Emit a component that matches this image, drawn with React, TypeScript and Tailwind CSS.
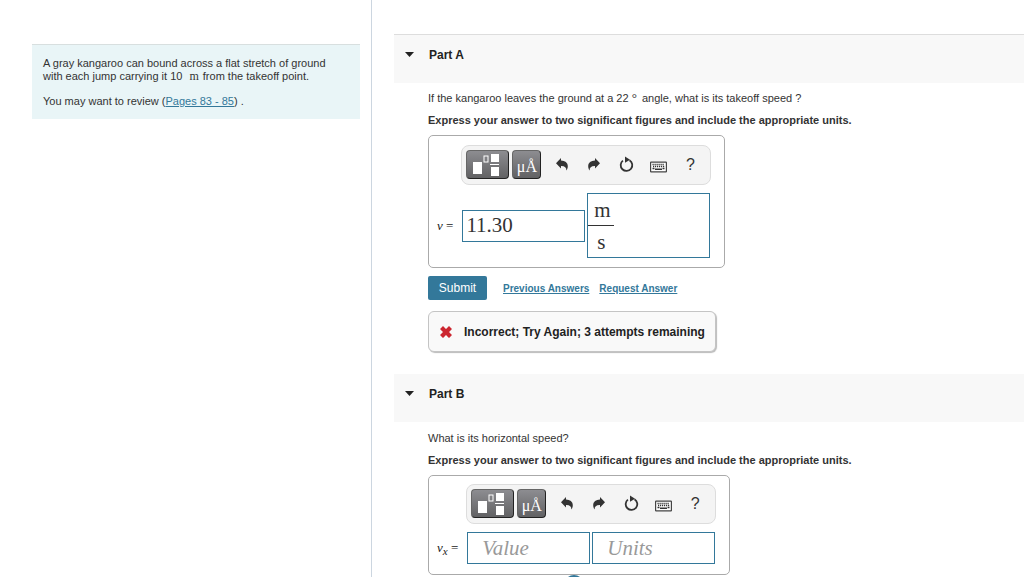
import type { ReactNode } from "react";

const sans = "font-['Liberation_Sans',Arial,sans-serif]";
const serif = "font-['Liberation_Serif','Times_New_Roman',serif]";

interface PartHeaderProps {
  title: string;
  first?: boolean;
}

function PartHeader({ title, first = false }: PartHeaderProps) {
  return (
    <button
      type="button"
      aria-expanded="true"
      className={`flex w-full items-start bg-[#f8f8f8] pt-3 pl-[11px] text-left ${first ? "h-[49px] border-t border-[#dddddd]" : "h-12"}`}
    >
      <svg viewBox="0 0 9 5" className="mt-[5px] h-[5px] w-[9px] fill-[#222222]" aria-hidden="true">
        <path d="M0 0h9L4.5 5z" />
      </svg>
      <span className="ml-[15px] text-xs leading-4 font-bold text-[#222222]">{title}</span>
    </button>
  );
}

function TemplatesIcon() {
  return (
    <svg viewBox="0 0 32 22" className="h-[22px] w-8" aria-hidden="true">
      <rect x="1" y="8" width="9" height="12" fill="#fff" />
      <rect x="12" y="2" width="4" height="6" fill="none" stroke="#fff" />
      <rect x="19" y="0" width="8" height="8" fill="#fff" />
      <rect x="18" y="10" width="9" height="1" fill="#fff" />
      <rect x="19" y="13" width="8" height="9" fill="#fff" />
    </svg>
  );
}

function UndoIcon({ flipped = false }: { flipped?: boolean }) {
  return (
    <svg viewBox="0 0 12 13" className="h-[13px] w-3 fill-[#333333]" aria-hidden="true">
      <path
        d="M5 0v2.6C9 2.8 11.8 4.8 11.8 8.2c0 1.7-.6 3.2-1.4 4.3.1-3-1.6-4.6-5.4-4.5V10.500L0 5.200z"
        transform={flipped ? "translate(12 0) scale(-1 1)" : undefined}
      />
    </svg>
  );
}

function ResetIcon() {
  return (
    <svg viewBox="0 0 15 17" className="h-[17px] w-[15px]" aria-hidden="true">
      <path d="M10.5 4.200A5.800 5.800 0 1 1 3.900 4.600" fill="none" stroke="#333333" strokeWidth="1.8" />
      <path d="M6 .5l5 3.300L6 6.800z" fill="#333333" />
    </svg>
  );
}

function KeyboardIcon() {
  return (
    <svg viewBox="0 0 17 12" className="h-3 w-[17px]" aria-hidden="true">
      <rect x="0.6" y="1.1" width="15.8" height="9.8" rx="0.5" fill="#fff" stroke="#444444" strokeWidth="1.2" />
      <path d="M2.5 3.5h12M3 5.5h11.5" stroke="#333333" strokeWidth="1.3" strokeDasharray="1.2 .8" />
      <path d="M2.5 7.5h2M12.5 7.5h2M5 8.3h7" stroke="#333333" strokeWidth="1.4" />
    </svg>
  );
}

const darkButton =
  "flex h-[29px] items-center justify-center rounded border border-[#666666] border-r-[#222222] border-b-[#222222] bg-linear-to-b from-[#8d8d91] to-[#626264] text-white";

function Toolbar() {
  return (
    <div className="flex h-10 w-[250px] items-center rounded-lg border border-[#dddddd] bg-[#f4f4f4] pb-px pl-1">
      <button type="button" aria-label="Templates" className={`${darkButton} w-[43px]`}>
        <TemplatesIcon />
      </button>
      <button type="button" aria-label="Symbols" className={`${darkButton} ml-[3px] w-[29px] pt-1 ${serif} text-base`}>
        μÅ
      </button>
      <div className="ml-[5px] flex flex-1 items-center">
        <button type="button" aria-label="Undo" className="flex w-8 justify-center">
          <UndoIcon />
        </button>
        <button type="button" aria-label="Redo" className="flex w-8 justify-center">
          <UndoIcon flipped />
        </button>
        <button type="button" aria-label="Reset" className="flex w-8 justify-center">
          <ResetIcon />
        </button>
        <button type="button" aria-label="Keyboard shortcuts" className="flex w-8 justify-center pt-1">
          <KeyboardIcon />
        </button>
        <button type="button" aria-label="Help" className="w-8 text-center text-base leading-5 text-[#333333]">
          ?
        </button>
      </div>
    </div>
  );
}

interface AnswerBoxProps {
  id: string;
  label: ReactNode;
  value?: string;
  units: ReactNode;
  className: string;
}

function AnswerBox({ id, label, value, units, className }: AnswerBoxProps) {
  return (
    <div className={`mt-2 w-fit rounded-[5px] border border-[#aaaaaa] bg-white pr-[13px] pl-2 ${className}`}>
      <div className="grid grid-cols-[auto_auto] items-center gap-y-2">
        <div className="col-start-2">
          <Toolbar />
        </div>
        <label htmlFor={id} className={`${serif} pr-2 text-[13px] leading-4 text-[#222222]`}>
          {label}
        </label>
        <div className="flex items-center gap-0.5 pl-px">
          <input
            id={id}
            defaultValue={value}
            placeholder="Value"
            className={`${serif} h-8 w-[123px] border border-[#33789a] bg-white text-[21px] text-[#333333] placeholder:text-[#999999] placeholder:italic ${value ? "px-[3px]" : "px-[14px]"}`}
          />
          {units}
        </div>
      </div>
    </div>
  );
}

function Instructions() {
  return (
    <p className="mt-2 text-[11px] leading-[14px] font-bold text-[#333333]">
      Express your answer to two significant figures and include the appropriate units.
    </p>
  );
}

export default function App() {
  return (
    <div className={`flex h-screen overflow-hidden bg-white ${sans} text-[11px] text-[#333333]`}>
      <aside className="w-[372px] shrink-0 border-r border-[#ccd6e0] pt-11 pr-[11px] pl-8">
        <div className="border-t border-[#d8dfdf] bg-[#e9f5f7] pt-3 pr-5 pb-[11px] pl-[11px] leading-[13px]">
          <p>
            A gray kangaroo can bound across a flat stretch of ground with each jump carrying it 10{" "}
            <span className={`${serif} px-1 text-xs leading-3`}>m</span>from the takeoff point.
          </p>
          <p className="mt-3">
            You may want to review (
            <a href="#pages" className="text-[#33789a] underline">
              Pages 83 - 85
            </a>
            ) .
          </p>
        </div>
      </aside>

      <main className="min-w-0 flex-1 pt-[34px] pl-[22px]">
        <section>
          <PartHeader title="Part A" first />
          <div className="pt-2 pl-[34px]">
            <p className="leading-[14px]">
              If the kangaroo leaves the ground at a 22 <span className={`${serif} pr-0.5 text-[13px] leading-3`}>°</span>{" "}
              angle, what is its takeoff speed ?
            </p>
            <Instructions />
            <AnswerBox
              id="takeoff-speed"
              label={
                <>
                  <i>v</i> =
                </>
              }
              value="11.30"
              className="pt-[9px] pb-[9px]"
              units={
                <div
                  role="textbox"
                  aria-label="Units"
                  tabIndex={0}
                  className={`${serif} h-[65px] w-[123px] border border-[#33789a] text-[21px] leading-8`}
                >
                  <div className="flex w-[26px] flex-col text-center">
                    <span className="h-8 border-b border-[#333333] pl-0.5">m</span>
                    <span className="h-8">s</span>
                  </div>
                </div>
              }
            />
            <div className="mt-2 flex items-center">
              <button type="button" className="h-6 w-[59px] rounded-xs bg-[#33789a] text-xs text-white">
                Submit
              </button>
              <a href="#previous" className="ml-4 text-[10px] font-bold text-[#33789a] underline">
                Previous Answers
              </a>
              <a href="#request" className="ml-[10px] text-[10px] font-bold text-[#33789a] underline">
                Request Answer
              </a>
            </div>
            <div className="mt-[11px] flex h-[41px] w-fit items-center rounded-md border border-[#c4c4c4] bg-[#f9f9f9] pr-[10px] pl-[11px] text-xs font-bold text-[#222222] shadow-[1px_1px_1px_#bbbbbb]">
              <svg viewBox="0 0 12 12" className="mr-3 h-3 w-3 fill-[#cc2630]" aria-hidden="true">
                <path d="M3 0l3 3 3-3 3 3-3 3 3 3-3 3-3-3-3 3-3-3 3-3-3-3z" />
              </svg>
              Incorrect; Try Again; 3 attempts remaining
            </div>
          </div>
        </section>

        <section className="mt-[22px]">
          <PartHeader title="Part B" />
          <div className="pt-[9px] pl-[34px]">
            <p className="leading-[14px]">What is its horizontal speed?</p>
            <Instructions />
            <AnswerBox
              id="horizontal-speed"
              label={
                <>
                  <i>
                    v<sub className="text-[11px]">x</sub>
                  </i>{" "}
                  =
                </>
              }
              className="pt-2 pb-[10px]"
              units={
                <input
                  aria-label="Units"
                  placeholder="Units"
                  className={`${serif} h-8 w-[123px] border border-[#33789a] bg-white px-[14px] text-[21px] placeholder:text-[#999999] placeholder:italic`}
                />
              }
            />
            <div className="ml-[136px] h-5 w-5 rounded-full border-2 border-[#33789a]" />
          </div>
        </section>
      </main>
    </div>
  );
}
